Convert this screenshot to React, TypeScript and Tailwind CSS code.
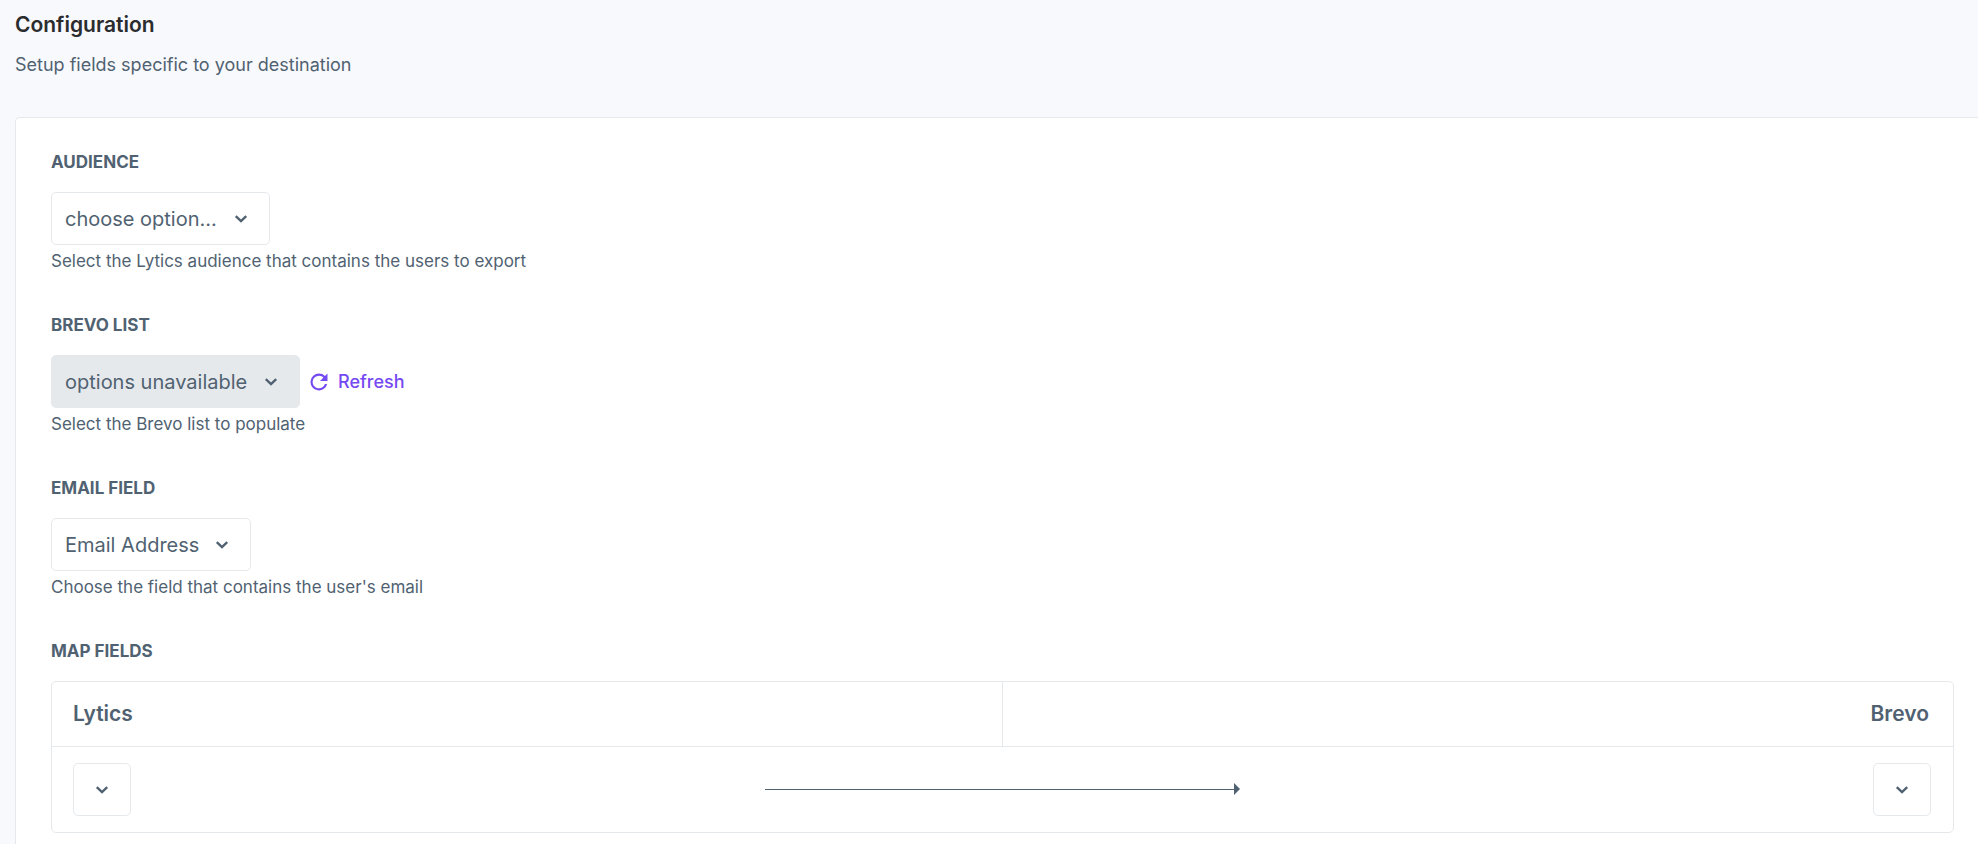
import React, { useState } from 'react';

interface DropdownProps {
  id: string;
  options: string[];
  className: string;
  label?: string;
  disabled?: boolean;
}

const Dropdown: React.FC<DropdownProps> = ({ id, options, className, label, disabled }) => {
  const [value, setValue] = useState(options[0]);

  return (
    <div className="relative inline-flex">
      <select
        id={id}
        aria-label={label}
        value={value}
        disabled={disabled}
        onChange={(e) => setValue(e.target.value)}
        className={`
          h-[53px] appearance-none rounded-[5px] border border-[#e6e9ec] bg-white pl-[13px] text-xl text-[#506271] opacity-100
          disabled:bg-[#e6e9ec] ${className}
        `}
      >
        {options.map(option => (
          <option key={option} value={option}>{option}</option>
        ))}
      </select>
      <svg
        className="pointer-events-none absolute right-[22px] top-[20px] h-[14px] w-[14px] text-[#506271]"
        viewBox="0 0 14 14"
        fill="none"
        stroke="currentColor"
        strokeWidth="2.4"
      >
        <path d="M1.8 4.1L7 9L12.2 4.1" />
      </svg>
    </div>
  );
};

interface FieldProps extends DropdownProps {
  title: string;
  help: string;
  children?: React.ReactNode;
}

const Field: React.FC<FieldProps> = ({ title, help, children, ...dropdown }) => (
  <div className="mb-[42px]">
    <label htmlFor={dropdown.id} className="mb-5 block text-[17px] leading-5 font-bold uppercase">
      {title}
    </label>
    <div className="flex items-center gap-[10px]">
      <Dropdown {...dropdown} />
      {children}
    </div>
    <p className="mt-1 text-[17px] leading-6">{help}</p>
  </div>
);

const RefreshIcon = () => (
  <svg className="h-[18px] w-[18px]" viewBox="3.5 3.5 17 17" fill="currentColor">
    <path d="M17.65 6.35A7.96 7.96 0 0 0 12 4a8 8 0 1 0 7.73 10h-2.08A6 6 0 1 1 12 6c1.66 0 3.14.69 4.22 1.78L13 11h7V4l-2.35 2.35z" />
  </svg>
);

const App: React.FC = () => {
  return (
    <div className="flex h-screen flex-col overflow-hidden bg-[#f8f9fd] pl-[15px] font-['Inter',sans-serif] text-[#506271]">
      <header className="pt-[11px] pb-[38px]">
        <h1 className="text-[21px] leading-7 font-semibold text-[#2b2c2e]">Configuration</h1>
        <p className="mt-3 text-lg leading-7">Setup fields specific to your destination</p>
      </header>

      <main className="flex-1 rounded-tl-[5px] border-t border-l border-[#e6e9ec] bg-white pt-[34px] pr-6 pl-[35px]">
        <Field
          id="audience"
          title="Audience"
          help="Select the Lytics audience that contains the users to export"
          options={['choose option...']}
          className="w-[219px]"
        />
        <Field
          id="brevo-list"
          title="Brevo List"
          help="Select the Brevo list to populate"
          options={['options unavailable']}
          className="w-[249px]"
          disabled
        >
          <button type="button" className="flex items-center gap-[10px] text-lg font-medium text-[#7549f2]">
            <RefreshIcon />
            Refresh
          </button>
        </Field>
        <Field
          id="email-field"
          title="Email Field"
          help="Choose the field that contains the user's email"
          options={['Email Address']}
          className="w-[200px]"
        />

        <h2 id="map-fields" className="mb-5 text-[17px] leading-5 font-bold uppercase">Map Fields</h2>
        <div className="rounded-[5px] border border-[#e6e9ec]">
          <table aria-labelledby="map-fields" className="w-full table-fixed border-collapse">
            <colgroup>
              <col className="w-3/8" />
              <col className="w-1/8" />
              <col className="w-1/8" />
              <col className="w-3/8" />
            </colgroup>
            <thead>
              <tr className="h-[64px] border-b border-[#e6e9ec] text-[21px]">
                <th colSpan={2} className="border-r border-[#e6e9ec] pl-[21px] text-left font-semibold">Lytics</th>
                <th colSpan={2} className="pr-6 text-right font-semibold">Brevo</th>
              </tr>
            </thead>
            <tbody>
              <tr>
                <td className="py-4 pl-[21px] align-middle">
                  <div className="flex">
                    <Dropdown id="map-source" label="Lytics field" options={['']} className="w-[58px]" />
                  </div>
                </td>
                <td colSpan={2} className="align-middle">
                  <div className="flex items-center">
                    <div className="h-px flex-1 bg-[#506271]" />
                    <div className="h-0 w-0 border-y-6 border-l-6 border-y-transparent border-l-[#506271]" />
                  </div>
                </td>
                <td className="py-4 pr-[22px] align-middle">
                  <div className="flex justify-end">
                    <Dropdown id="map-target" label="Brevo field" options={['']} className="w-[58px]" />
                  </div>
                </td>
              </tr>
            </tbody>
          </table>
        </div>
      </main>
    </div>
  );
};

export default App;
